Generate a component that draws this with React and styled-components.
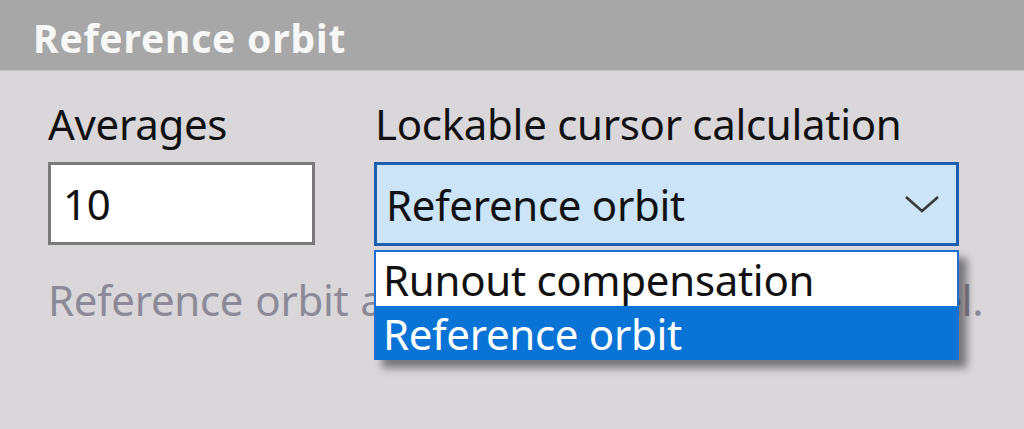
import styled, { createGlobalStyle } from 'styled-components'

const GlobalStyle = createGlobalStyle`
  html, body {
    margin: 0;
    padding: 0;
    background: #d9d7da;
  }
  body {
    font-family: "Noto Sans", "Liberation Sans", sans-serif;
    letter-spacing: -0.3px;
    overflow: hidden;
  }
`

const Panel = styled.div`
  width: 1024px;
  height: 429px;
  background: #d9d7da;
`

const Header = styled.div`
  height: 71px;
  background: #a7a7a7;
  border-bottom: 1px solid #c2c2c2;
  display: flex;
  align-items: center;
  padding: 4px 0 0 33px;
  box-sizing: border-box;
`

const Title = styled.h2`
  margin: 0;
  font-size: 39px;
  font-weight: 700;
  color: #f7f7f7;
  letter-spacing: 0.8px;
`

const Body = styled.div`
  padding: 24px 0 0 48px;
`

const Row = styled.div`
  display: flex;
  gap: 59px;
`

const Field = styled.div`
  display: flex;
  flex-direction: column;
  gap: 9px;
  width: ${(p) => p.$width}px;
  position: relative;
`

const Label = styled.div`
  font-size: 42px;
  line-height: 58px;
  color: #111;
  margin-left: ${(p) => p.$indent || 0}px;
`

const TextBox = styled.div`
  height: 83px;
  box-sizing: border-box;
  border: 3px solid #7a7a7a;
  background: #fff;
  font-size: 42px;
  color: #111;
  display: flex;
  align-items: center;
  padding-left: 12px;
`

const Combo = styled.div`
  height: 84px;
  box-sizing: border-box;
  border: 3px solid #1c5fae;
  background: #cce4f7;
  font-size: 42px;
  color: #111;
  display: flex;
  align-items: center;
  justify-content: space-between;
  padding: 0 16px 0 9px;
`

const List = styled.ul`
  position: absolute;
  top: 155px;
  left: 0;
  right: 0;
  margin: 0;
  padding: 0;
  list-style: none;
  box-sizing: border-box;
  border: 2px solid #1f6fd0;
  border-bottom: none;
  box-shadow: 8px 8px 8px rgba(0, 0, 0, 0.45);
  z-index: 2;
`

const Option = styled.li`
  height: 54px;
  display: flex;
  align-items: center;
  padding-left: 7px;
  font-size: 42px;
  color: ${(p) => (p.$selected ? '#fff' : '#111')};
  background: ${(p) => (p.$selected ? '#0a74d6' : '#fff')};
`

const Hint = styled.p`
  margin: 25px 0 0;
  font-size: 42px;
  line-height: 58px;
  color: #8b8a96;
  white-space: nowrap;
  word-spacing: 1.4px;
`

const Chevron = () => (
  <svg width="36" height="20" viewBox="0 0 36 20">
    <path d="M2 3 L18 17 L34 3" fill="none" stroke="#3a3a3a" strokeWidth="2.6" />
  </svg>
)

function App() {
  return (
    <Panel>
      <GlobalStyle />
      <Header>
        <Title>Reference orbit</Title>
      </Header>
      <Body>
        <Row>
          <Field $width={267}>
            <Label>Averages</Label>
            <TextBox>10</TextBox>
          </Field>
          <Field $width={585}>
            <Label $indent={1}>Lockable cursor calculation</Label>
            <Combo>
              Reference orbit
              <Chevron />
            </Combo>
            <List>
              <Option>Runout compensation</Option>
              <Option $selected>Reference orbit</Option>
            </List>
          </Field>
        </Row>
        <Hint>Reference orbit averages are reset in this panel.</Hint>
      </Body>
    </Panel>
  )
}

export default App
